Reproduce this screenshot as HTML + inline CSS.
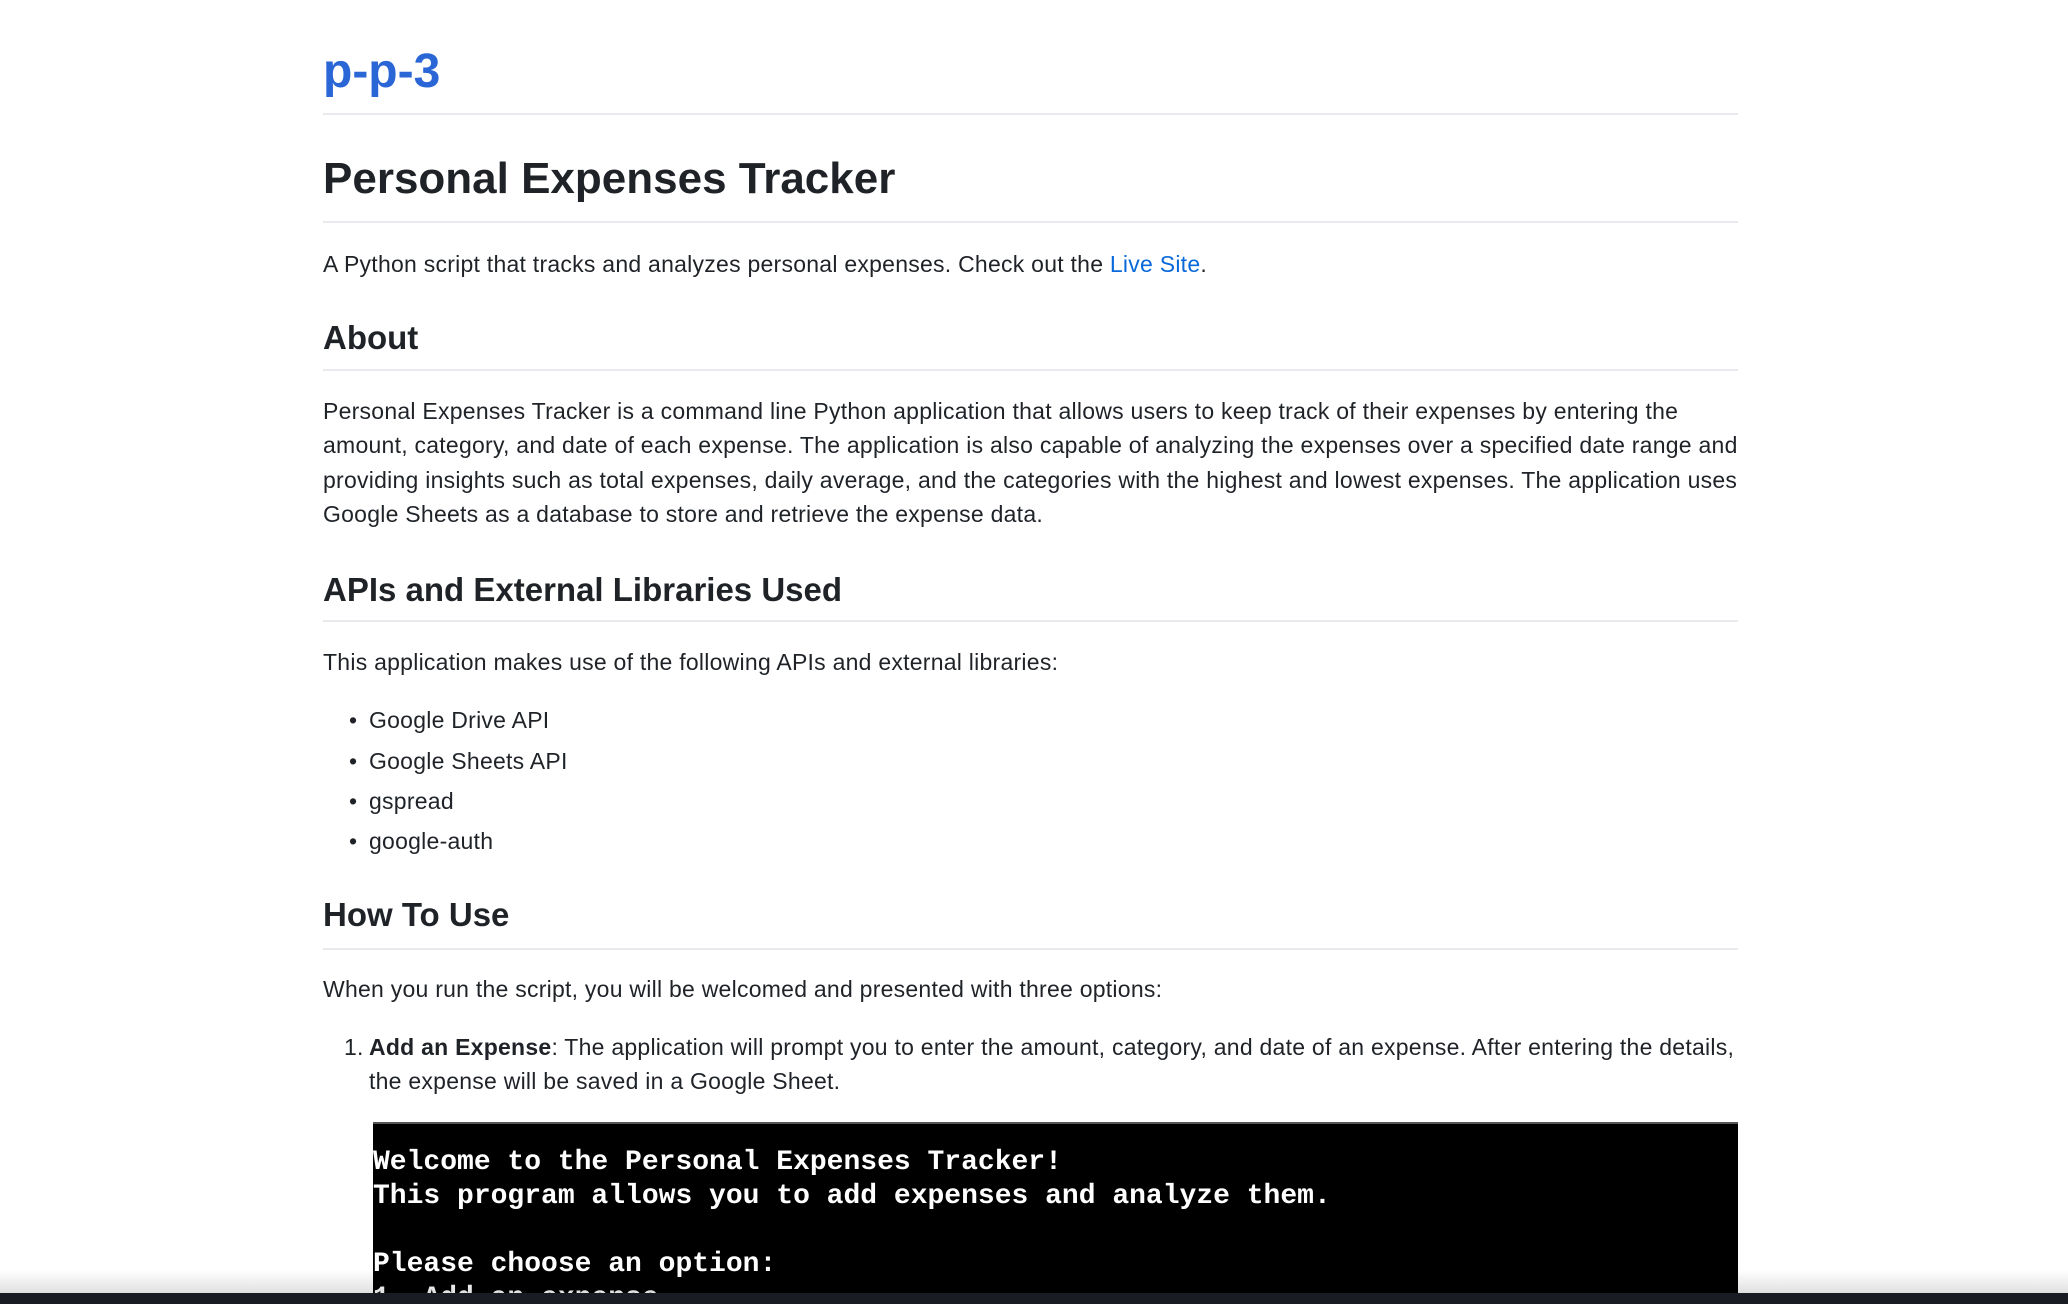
<!DOCTYPE html>
<html><head><meta charset="utf-8"><style>
*{margin:0;padding:0;box-sizing:border-box}
body{width:2068px;height:1304px;overflow:hidden;background:#fff;font-family:"Liberation Sans",sans-serif;color:#1f2328;position:relative}
.t{position:absolute;left:323px;white-space:nowrap;font-size:23px;letter-spacing:0.25px;line-height:34.3px}
.hr{position:absolute;left:323px;width:1415px;height:2px;background:#e8eaed}
h1,h2{position:absolute;left:323px;font-weight:700;white-space:nowrap}
a{color:#0969da;text-decoration:none}
</style></head><body>
<h1 style="top:40px;font-size:48px;line-height:64px;color:#2a66d6">p-p-3</h1>
<div class="hr" style="top:113px"></div>
<h1 style="top:147px;font-size:44px;line-height:64px">Personal Expenses Tracker</h1>
<div class="hr" style="top:221px"></div>
<div class="t" style="top:247px">A Python script that tracks and analyzes personal expenses. Check out the <a>Live Site</a>.</div>
<h2 style="top:314px;font-size:33px;line-height:48px">About</h2>
<div class="hr" style="top:369px"></div>
<div class="t" style="top:394px;white-space:normal;width:1420px">Personal Expenses Tracker is a command line Python application that allows users to keep track of their expenses by entering the amount, category, and date of each expense. The application is also capable of analyzing the expenses over a specified date range and providing insights such as total expenses, daily average, and the categories with the highest and lowest expenses. The application uses Google Sheets as a database to store and retrieve the expense data.</div>
<h2 style="top:566px;font-size:33px;line-height:48px">APIs and External Libraries Used</h2>
<div class="hr" style="top:620px"></div>
<div class="t" style="top:645px">This application makes use of the following APIs and external libraries:</div>
<div class="t" style="top:703px;left:349px">•</div><div class="t" style="top:703px;left:369px">Google Drive API</div>
<div class="t" style="top:744px;left:349px">•</div><div class="t" style="top:744px;left:369px">Google Sheets API</div>
<div class="t" style="top:784px;left:349px">•</div><div class="t" style="top:784px;left:369px">gspread</div>
<div class="t" style="top:824px;left:349px">•</div><div class="t" style="top:824px;left:369px">google-auth</div>
<h2 style="top:891px;font-size:33px;line-height:48px">How To Use</h2>
<div class="hr" style="top:948px"></div>
<div class="t" style="top:972px">When you run the script, you will be welcomed and presented with three options:</div>
<div class="t" style="top:1030px;left:344px">1.</div>
<div class="t" style="top:1030px;left:369px;white-space:normal;width:1375px"><b>Add an Expense</b>: The application will prompt you to enter the amount, category, and date of an expense. After entering the details, the expense will be saved in a Google Sheet.</div>
<div style="position:absolute;left:373px;top:1122px;width:1365px;height:182px;background:#000;border-top:2px solid #555;color:#fff;font-family:'Liberation Mono',monospace;font-weight:700;font-size:28px;line-height:34px;padding-top:22px;white-space:pre">Welcome to the Personal Expenses Tracker!
This program allows you to add expenses and analyze them.

Please choose an option:
1. Add an expense</div>
<div style="position:absolute;left:0;top:1270px;width:2068px;height:23px;background:linear-gradient(rgba(0,0,0,0),rgba(0,0,0,0.12))"></div>
<div style="position:absolute;left:0;top:1293px;width:2068px;height:11px;background:#1a1c24"></div>
</body></html>
